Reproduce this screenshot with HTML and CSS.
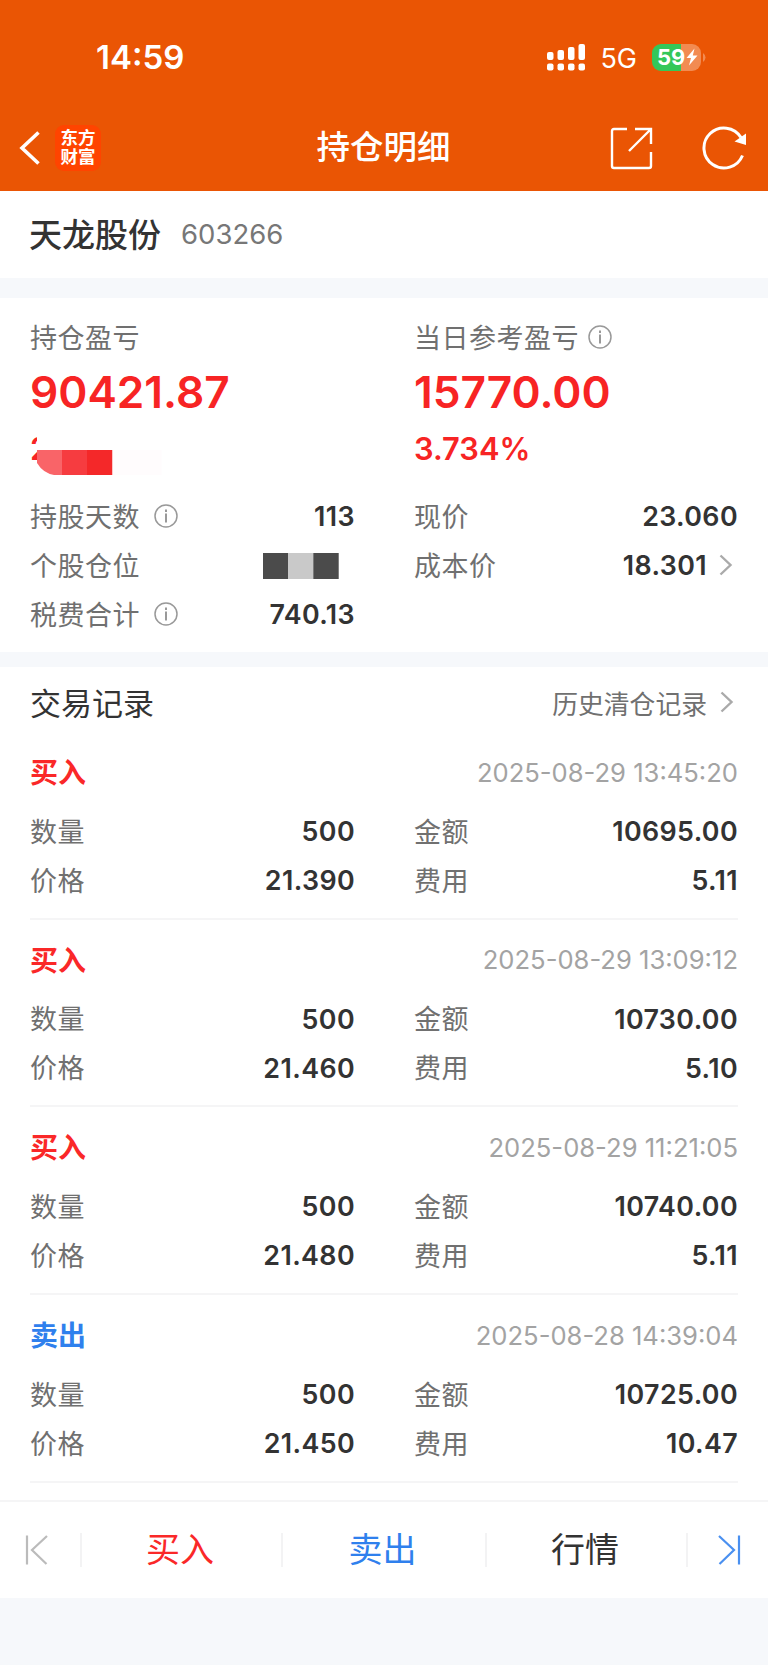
FILE: index.html
```html
<!DOCTYPE html>
<html lang="zh-CN">
<head>
    <meta charset="UTF-8">
    <meta name="viewport" content="width=device-width, initial-scale=1.0">
    <title>持仓明细</title>
    <link rel="stylesheet" href="styles.css">
</head>
<body>
    <header class="header">
        <div class="status-bar">
            <span class="time">14:59</span>
            <div class="status-icons">
                <svg class="signal" width="40" height="28" viewBox="0 0 40 28" fill="#fff">
                    <rect x="1" y="9" width="6.5" height="8" rx="2"/>
                    <rect x="11.5" y="7" width="6.5" height="10" rx="2"/>
                    <rect x="22" y="4" width="6.5" height="13" rx="2"/>
                    <rect x="32.5" y="1" width="6.5" height="16" rx="2"/>
                    <rect x="1" y="20.5" width="6.5" height="7" rx="2"/>
                    <rect x="11.5" y="20.5" width="6.5" height="7" rx="2"/>
                    <rect x="22" y="20.5" width="6.5" height="7" rx="2"/>
                    <rect x="32.5" y="20.5" width="6.5" height="7" rx="2"/>
                </svg>
                <span class="network">5G</span>
                <div class="battery">
                    <span>59</span>
                    <svg width="12" height="18" viewBox="0 0 12 18"><path d="M8.5 0.5L0.5 10H5L3 17.5L11.5 7.5H6.8Z" fill="#fff"/></svg>
                </div>
                <svg class="battery-tip" width="3" height="9" viewBox="0 0 3 9"><path d="M0 0Q2.5 1.5 2.5 4.5T0 9Z" fill="#f28b52"/></svg>
            </div>
        </div>
        <div class="nav">
            <div class="nav-left">
                <svg width="22" height="36" viewBox="0 0 22 36"><path d="M19.5 2.5L3 18L19.5 33.5" fill="none" stroke="#fff" stroke-width="3.6"/></svg>
                <div class="logo"><span>东方</span><span>财富</span></div>
            </div>
            <h1>持仓明细</h1>
            <div class="nav-right">
                <svg width="44" height="44" viewBox="0 0 44 44" fill="none" stroke="#fff" stroke-width="2.4">
                    <path d="M18 3H5Q3 3 3 5V40Q3 42 5 42H40Q42 42 42 40V26M26 3H42V18M41 4L20 25"/>
                </svg>
                <svg width="46" height="44" viewBox="0 0 46 44">
                    <path d="M40.5 29.5A20 20 0 1 1 39 11.5" fill="none" stroke="#fff" stroke-width="3"/>
                    <path d="M44 7.5V19L32.5 15.5Z" fill="#fff"/>
                </svg>
            </div>
        </div>
    </header>

    <section class="stock">
        <h2>天龙股份</h2>
        <span class="code">603266</span>
    </section>

    <section class="summary">
        <div class="col">
            <div class="label">持仓盈亏</div>
            <div class="amount">90421.87</div>
            <div class="percent masked">
                <span class="digit">2</span>
                <!-- mosaic over the hidden percentage -->
                <svg width="125" height="52" viewBox="0 0 125 52">
                    <rect width="125" height="52" fill="#fff"/>
                    <path d="M0 27H25V52H17Q6 50 0 40Z" fill="#f96468"/>
                    <rect x="25" y="27" width="25" height="25" fill="#f63c40"/>
                    <rect x="50" y="27" width="25.5" height="25" fill="#f42829"/>
                    <rect x="75.5" y="27" width="49" height="25" fill="#fffcfd"/>
                </svg>
            </div>
            <div class="row">
                <span class="label">持股天数</span>
                <svg class="info" width="24" height="24" viewBox="0 0 24 24"><circle cx="12" cy="12" r="11" fill="none" stroke="#999" stroke-width="1.5"/><path d="M12 9.5V18.5M12 5.5V8" stroke="#999" stroke-width="2"/></svg>
                <span class="value">113</span>
            </div>
            <div class="row">
                <span class="label">个股仓位</span>
                <svg class="mosaic" width="76" height="26" viewBox="0 0 76 26">
                    <rect width="25.3" height="26" fill="#4b4b4b"/>
                    <rect x="25.3" width="25" height="26" fill="#c9c9c9"/>
                    <rect x="50.3" width="25.4" height="26" fill="#4b4b4b"/>
                </svg>
            </div>
            <div class="row">
                <span class="label">税费合计</span>
                <svg class="info" width="24" height="24" viewBox="0 0 24 24"><circle cx="12" cy="12" r="11" fill="none" stroke="#999" stroke-width="1.5"/><path d="M12 9.5V18.5M12 5.5V8" stroke="#999" stroke-width="2"/></svg>
                <span class="value">740.13</span>
            </div>
        </div>
        <div class="col">
            <div class="label">当日参考盈亏<svg class="info near" width="24" height="24" viewBox="0 0 24 24"><circle cx="12" cy="12" r="11" fill="none" stroke="#999" stroke-width="1.5"/><path d="M12 9.5V18.5M12 5.5V8" stroke="#999" stroke-width="2"/></svg></div>
            <div class="amount">15770.00</div>
            <div class="percent">3.734%</div>
            <div class="row"><span class="label">现价</span><span class="value">23.060</span></div>
            <div class="row">
                <span class="label">成本价</span><span class="value">18.301</span>
                <svg class="arrow" width="14" height="22" viewBox="0 0 14 22"><path d="M1.5 1.5L11.5 11L1.5 20.5" fill="none" stroke="#aaa" stroke-width="2.4"/></svg>
            </div>
        </div>
    </section>

    <section class="records">
        <div class="records-head">
            <h3>交易记录</h3>
            <a class="history">历史清仓记录
                <svg class="arrow" width="14" height="22" viewBox="0 0 14 22"><path d="M1.5 1.5L11.5 11L1.5 20.5" fill="none" stroke="#aaa" stroke-width="2.4"/></svg>
            </a>
        </div>

        <div class="record">
            <div class="record-top"><span class="type buy">买入</span><span class="date">2025-08-29 13:45:20</span></div>
            <div class="grid">
                <div class="row"><span class="label">数量</span><span class="value">500</span></div>
                <div class="row"><span class="label">金额</span><span class="value">10695.00</span></div>
                <div class="row"><span class="label">价格</span><span class="value">21.390</span></div>
                <div class="row"><span class="label">费用</span><span class="value">5.11</span></div>
            </div>
        </div>
        <div class="record">
            <div class="record-top"><span class="type buy">买入</span><span class="date">2025-08-29 13:09:12</span></div>
            <div class="grid">
                <div class="row"><span class="label">数量</span><span class="value">500</span></div>
                <div class="row"><span class="label">金额</span><span class="value">10730.00</span></div>
                <div class="row"><span class="label">价格</span><span class="value">21.460</span></div>
                <div class="row"><span class="label">费用</span><span class="value">5.10</span></div>
            </div>
        </div>
        <div class="record">
            <div class="record-top"><span class="type buy">买入</span><span class="date">2025-08-29 11:21:05</span></div>
            <div class="grid">
                <div class="row"><span class="label">数量</span><span class="value">500</span></div>
                <div class="row"><span class="label">金额</span><span class="value">10740.00</span></div>
                <div class="row"><span class="label">价格</span><span class="value">21.480</span></div>
                <div class="row"><span class="label">费用</span><span class="value">5.11</span></div>
            </div>
        </div>
        <div class="record">
            <div class="record-top"><span class="type sell">卖出</span><span class="date">2025-08-28 14:39:04</span></div>
            <div class="grid">
                <div class="row"><span class="label">数量</span><span class="value">500</span></div>
                <div class="row"><span class="label">金额</span><span class="value">10725.00</span></div>
                <div class="row"><span class="label">价格</span><span class="value">21.450</span></div>
                <div class="row"><span class="label">费用</span><span class="value">10.47</span></div>
            </div>
        </div>
    </section>

    <footer class="toolbar">
        <a class="step prev"><svg width="24" height="32" viewBox="0 0 24 32" fill="none" stroke="#bbb" stroke-width="2.2"><path d="M2 1.5V30.5M22 2L7 16L21.5 30"/></svg></a>
        <a class="tab buy"><span>买入</span></a>
        <a class="tab sell"><span>卖出</span></a>
        <a class="tab"><span>行情</span></a>
        <a class="step next"><svg width="24" height="32" viewBox="0 0 24 32" fill="none" stroke="#4a90f0" stroke-width="2.2"><path d="M22 1.5V30.5M2 2L17 16L2.5 30"/></svg></a>
    </footer>
</body>
</html>
```
FILE: styles.css
```css
* {
    box-sizing: border-box;
}
body {
    font-family: Inter, "Noto Sans CJK SC", sans-serif;
    background-color: #f6f8fb;
    color: #333;
    margin: 0;
    height: 1665px;
    overflow: hidden;
}
h1, h2, h3 {
    margin: 0;
}
svg {
    display: block;
    flex-shrink: 0;
}
.header {
    height: 191px;
    background-color: #ea5504;
    color: #fff;
}
.status-bar {
    height: 106px;
    padding: 8px 62px 0 96px;
    display: flex;
    align-items: center;
    justify-content: space-between;
}
.time {
    font-size: 33px;
    font-weight: 600;
}
.status-icons {
    display: flex;
    align-items: center;
}
.network {
    font-size: 27px;
    margin: 2px 15px 0 14px;
}
.battery {
    display: flex;
    align-items: center;
    gap: 1px;
    width: 49px;
    height: 27px;
    padding-left: 5px;
    border-radius: 9px;
    background: linear-gradient(to right, #34c759 59%, #f28b52 59%);
    font-size: 22px;
    font-weight: 700;
}
.battery-tip {
    margin-left: 2px;
}
.nav {
    height: 84px;
    padding: 0 20px 0 19px;
    display: grid;
    grid-template-columns: 1fr auto 1fr;
    align-items: center;
}
.nav-left {
    display: flex;
    align-items: center;
    gap: 14px;
}
.logo {
    display: flex;
    flex-direction: column;
    justify-content: center;
    align-items: center;
    width: 46px;
    height: 46px;
    padding-bottom: 2px;
    border-radius: 9px;
    background-color: #ff4400;
    font-size: 17.5px;
    font-weight: 700;
    line-height: 19px;
}
.nav h1 {
    padding-bottom: 2px;
    font-size: 33.5px;
    font-weight: 500;
    line-height: 40px;
}
.nav-right {
    display: flex;
    justify-content: flex-end;
    gap: 49px;
}
.stock {
    display: flex;
    align-items: center;
    height: 87px;
    padding: 0 0 2px 29px;
    background-color: #fff;
}
.stock h2 {
    padding-bottom: 2px;
    font-size: 33px;
    font-weight: 500;
}
.code {
    margin-left: 20px;
    font-size: 27.5px;
    color: #777;
}
.summary {
    display: grid;
    grid-template-columns: 324px 323px;
    column-gap: 60px;
    height: 354px;
    margin-top: 20px;
    padding: 15px 30px 0;
    background-color: #fff;
}
.label {
    display: flex;
    align-items: center;
    height: 48px;
    padding-bottom: 2px;
    font-size: 27px;
    letter-spacing: 0.5px;
    color: #707070;
    white-space: nowrap;
}
.amount {
    height: 62px;
    line-height: 62px;
    font-size: 44.2px;
    font-weight: 600;
    color: #f72424;
}
.percent {
    height: 69px;
    line-height: 52px;
    font-size: 30.8px;
    font-weight: 600;
    color: #f72424;
}
.masked {
    display: flex;
}
.masked .digit {
    width: 20px;
}
.masked svg {
    margin-left: -13px;
    z-index: 1;
}
.row {
    display: flex;
    align-items: center;
    height: 49px;
    padding-bottom: 1px;
}
.info {
    margin-left: 14px;
}
.info.near {
    margin: 2px 0 0 9px;
}
.value {
    margin-left: auto;
    margin-right: -1px;
    font-size: 26.8px;
    font-weight: 600;
    letter-spacing: 0.4px;
}
.mosaic {
    margin: 2px 15px 0 auto;
}
.arrow {
    margin: 0 4px 0 13px;
}
.records {
    height: 833px;
    margin-top: 15px;
    padding: 0 30px;
    background-color: #fff;
}
.records-head {
    display: flex;
    align-items: center;
    justify-content: space-between;
    height: 65px;
    padding-top: 7px;
}
.records-head h3 {
    padding-bottom: 4px;
    font-size: 31px;
    font-weight: 400;
}
.history {
    display: flex;
    align-items: center;
    padding-bottom: 2px;
    font-size: 25.8px;
    color: #707070;
}
.record {
    height: 187.7px;
    border-bottom: 2px solid #f5f5f6;
}
.record-top {
    display: flex;
    align-items: center;
    justify-content: space-between;
    height: 75px;
    padding-top: 5px;
}
.type {
    padding-bottom: 2px;
    font-size: 28px;
    font-weight: 700;
}
.date {
    font-size: 25.6px;
    color: #a3a3a3;
}
.grid {
    display: grid;
    grid-template-columns: 324px 323px;
    column-gap: 60px;
}
.buy {
    color: #fa2828;
}
.sell {
    color: #2f80ed;
}
.toolbar {
    display: grid;
    grid-template-columns: 82px 201px 204px 201px 80px;
    align-items: center;
    height: 98px;
    border-top: 2px solid #f5f5f6;
    background-color: #fff;
}
.step, .tab {
    display: flex;
    align-items: center;
    justify-content: center;
    height: 34px;
    border-right: 2px solid #f3f3f4;
    font-size: 34px;
}
.tab span {
    padding: 0 3px 6px 0;
}
.step.prev {
    justify-content: flex-start;
    padding-left: 25px;
}
.step.next {
    border-right: none;
    justify-content: flex-end;
    padding-right: 27px;
}
```
